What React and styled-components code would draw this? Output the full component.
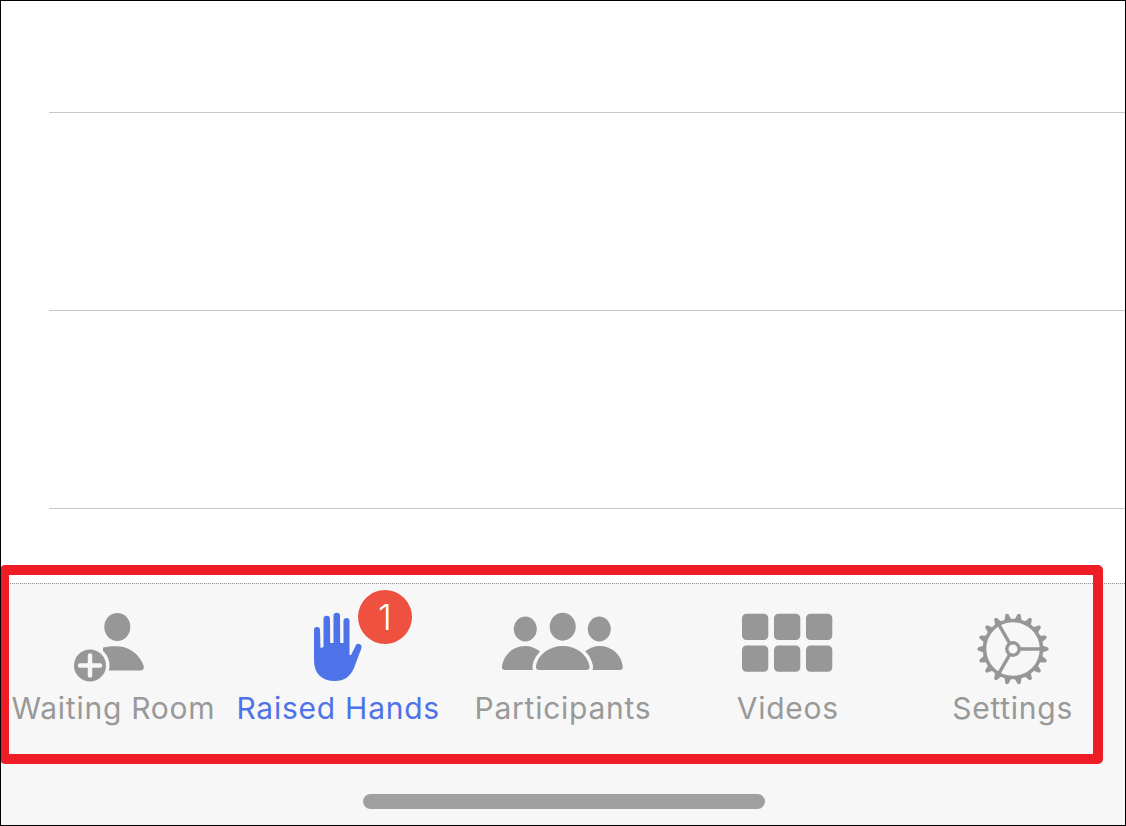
import styled, { createGlobalStyle } from 'styled-components';

const GlobalStyle = createGlobalStyle`
    html, body {
        margin: 0;
        padding: 0;
        background: #ffffff;
    }
`;

const tabs = [
    { label: 'Waiting Room', icon: <WaitingIcon /> },
    { label: 'Raised Hands', icon: <HandIcon />, active: true, badge: 1 },
    { label: 'Participants', icon: <ParticipantsIcon /> },
    { label: 'Videos', icon: <VideosIcon /> },
    { label: 'Settings', icon: <SettingsIcon /> },
];

export default function App() {
    return (
        <Screen>
            <GlobalStyle />
            <List>
                <ListRow />
                <ListRow />
                <ListRow />
            </List>
            <BottomBar>
                <Tabs>
                    {tabs.map((tab) => (
                        <Tab key={tab.label}>
                            {tab.icon}
                            {tab.badge && <Badge>{tab.badge}</Badge>}
                            <TabLabel $active={tab.active}>{tab.label}</TabLabel>
                        </Tab>
                    ))}
                </Tabs>
                <HomeBar />
            </BottomBar>
            <Highlight />
        </Screen>
    );
}

function WaitingIcon() {
    return (
        <Icon viewBox="63 612 100 76">
            <ellipse cx="117.3" cy="627" rx="13" ry="14" />
            <path d="M103 647.5 C110 646 116 646 120 646.500 C132 648 140 656 143.700 666 Q144.500 670.500 140 670.500 H103 Z" />
            <circle cx="90" cy="665.500" r="19.500" fill="#f7f7f7" />
            <circle cx="90" cy="665.500" r="16" />
            <path d="M80 665.500 H100 M90 655.500 V675.500" stroke="#f7f7f7" strokeWidth="4.500" strokeLinecap="round" />
        </Icon>
    );
}

function HandIcon() {
    return (
        <Icon $color="#4e73e8" viewBox="-12 12 100 76">
            <path d="M14 60 L14 30 A3 3 0 0 1 20 30 L20.500 48 L23.500 47 L23.500 19 A3.200 3.200 0 0 1 30 19 L30.200 43 L33.500 43 L33.500 16 A3.200 3.200 0 0 1 40 16 L40.200 43 L43.500 43 L43.500 21 A3 3 0 0 1 49.500 21 L49.500 55 L51 55 L56 45 A3.200 3.200 0 0 1 61.500 48 L54 68 C50 77 44 81 35 81 C22 81 14 74 14 60 Z" />
        </Icon>
    );
}

function ParticipantsIcon() {
    return (
        <Icon viewBox="513 612 100 76">
            <ellipse cx="525.300" cy="629" rx="11.500" ry="12.500" />
            <ellipse cx="599.300" cy="629" rx="11.500" ry="12.500" />
            <path d="M502 666 C504 654 514 646 525 646 C536 646 546 654 549 666 Q549.500 670 546 670 H505 Q501.500 670 502 666 Z" />
            <path d="M576 666 C579 654 589 646 600 646 C611 646 621 654 622.700 666 Q623.200 670 619.700 670 H579 Q575.500 670 576 666 Z" />
            <path d="M536 666 C538 654 550 646 563 646 C576 646 587 654 589.500 666 Q590 670 586.500 670 H539 Q535.500 670 536 666 Z" stroke="#f7f7f7" strokeWidth="7" paintOrder="stroke" />
            <ellipse cx="562.700" cy="626.700" rx="13" ry="14" />
        </Icon>
    );
}

function VideosIcon() {
    const cols = [742, 774, 806];
    const rows = [613.700, 645.400];
    return (
        <Icon viewBox="738 612 100 76">
            {rows.map((y) =>
                cols.map((x) => <rect key={`${x}-${y}`} x={x} y={y} width="26.300" height="26.300" rx="4.500" />),
            )}
        </Icon>
    );
}

function SettingsIcon() {
    const teeth = Array.from({ length: 18 }, (_, i) => i * 20);
    return (
        <Icon viewBox="-50 -37 100 76">
            {teeth.map((deg) => (
                <path key={deg} d="M-4 -28 L-1.600 -35 Q0 -36.500 1.600 -35 L4 -28 Z" transform={`rotate(${deg + 90})`} />
            ))}
            <g fill="none" stroke="#979797">
                <circle r="28.500" strokeWidth="3.600" />
                <circle r="6.200" strokeWidth="3.400" />
                <path d="M6 0 H28 M-3 5.200 L-14 24.200 M-3 -5.200 L-14 -24.200" strokeWidth="3.400" />
            </g>
        </Icon>
    );
}

const Screen = styled.div`
    position: relative;
    box-sizing: border-box;
    width: 1126px;
    height: 826px;
    border: 1px solid #000000;
    display: flex;
    flex-direction: column;
    overflow: hidden;
    font-family: Inter, 'Liberation Sans', sans-serif;
`;

const List = styled.div`
    flex: 1;
    padding-left: 48px;
    background: #ffffff;
`;

const ListRow = styled.div`
    box-sizing: border-box;
    height: 198px;
    border-bottom: 1px solid #c8c8c8;

    &:first-child {
        height: 112px;
    }
`;

const BottomBar = styled.footer`
    box-sizing: border-box;
    height: 242px;
    display: flex;
    flex-direction: column;
    justify-content: space-between;
    align-items: center;
    padding: 28px 0 16px;
    background: #f7f7f7;
    border-top: 1px dotted #8f8f8f;
`;

const Tabs = styled.nav`
    align-self: stretch;
    display: grid;
    grid-template-columns: repeat(5, 1fr);
`;

const Tab = styled.div`
    position: relative;
    display: flex;
    flex-direction: column;
    align-items: center;
`;

const Icon = styled.svg`
    display: block;
    width: 100px;
    height: 76px;
    overflow: visible;
    fill: ${(p) => p.$color || '#979797'};
`;

const TabLabel = styled.span`
    margin-top: 3px;
    font-size: 30px;
    line-height: 34px;
    letter-spacing: 0.75px;
    white-space: nowrap;
    color: ${(p) => (p.$active ? '#4e73e8' : '#999999')};
`;

const Badge = styled.span`
    position: absolute;
    top: -22px;
    left: 132px;
    width: 54px;
    height: 54px;
    border-radius: 50%;
    display: flex;
    align-items: center;
    justify-content: center;
    background: #ee5140;
    color: #ffffff;
    font-size: 35px;
    font-weight: 300;
`;

const HomeBar = styled.div`
    width: 402px;
    height: 15px;
    margin-left: 2px;
    border-radius: 8px;
    background: #a0a0a0;
`;

const Highlight = styled.div`
    position: absolute;
    top: 564px;
    left: -1px;
    box-sizing: border-box;
    width: 1103px;
    height: 199px;
    border: 10px solid #ee1c25;
    border-left-width: 9px;
    border-radius: 5px;
    pointer-events: none;
`;
